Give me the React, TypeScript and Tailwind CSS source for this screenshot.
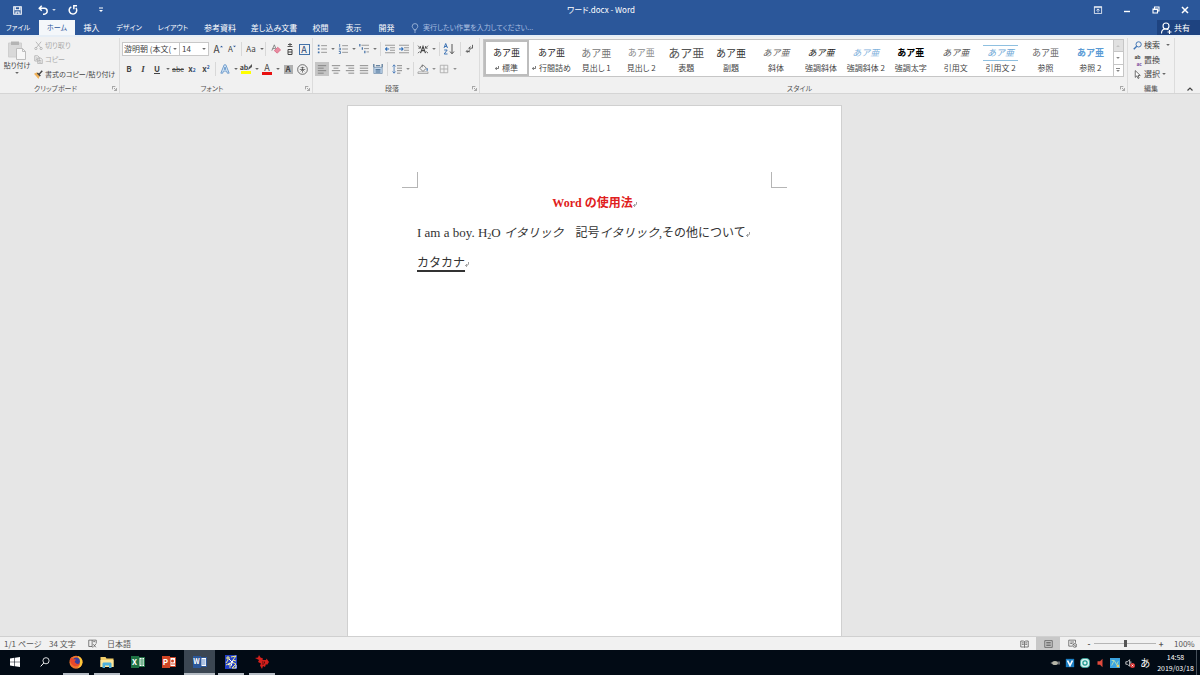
import type { ReactNode } from "react";
import { clsx } from "clsx";

interface ToolProps {
  label: string;
  className?: string;
  children: ReactNode;
}

function Tool({ label, className, children }: ToolProps) {
  return (
    <button
      aria-label={label}
      title={label}
      className={clsx(
        "flex h-3.5 shrink-0 items-center justify-center leading-none",
        className
      )}
    >
      {children}
    </button>
  );
}

function Caret({ className }: { className?: string }) {
  return (
    <svg viewBox="0 0 4 2" className={clsx("h-0.5 w-1 shrink-0 opacity-80", className)} fill="currentColor">
      <path d="M.2 0h3.600L2 2z" />
    </svg>
  );
}

function More({ label }: { label: string }) {
  return (
    <Tool label={label} className="w-[7px]">
      <Caret />
    </Tool>
  );
}

function Sep({ className }: { className?: string }) {
  return <span className={clsx("h-3.5 w-px shrink-0 bg-[#d8d8d8]", className)} />;
}

function Svg({
  className,
  box = "0 0 12 12",
  children,
}: {
  className?: string;
  box?: string;
  children: ReactNode;
}) {
  return (
    <svg
      viewBox={box}
      fill="none"
      stroke="currentColor"
      className={clsx("shrink-0", className ?? "h-3 w-3")}
    >
      {children}
    </svg>
  );
}

function Launcher({ label }: { label: string }) {
  return (
    <button aria-label={label} className="text-[#777]">
      <Svg className="h-[5px] w-[5px]" box="0 0 6 6">
        <path d="M.5 4V.5H4M2.5 2.5l2 2M5.5 2.5v3h-3" strokeWidth=".8" />
      </Svg>
    </button>
  );
}

function Group({
  label,
  launcher = true,
  className,
  children,
}: {
  label: string;
  launcher?: boolean;
  className?: string;
  children: ReactNode;
}) {
  return (
    <section
      aria-label={label}
      className={clsx("flex shrink-0 flex-col border-r border-[#dcdcdc]", className)}
    >
      <div className="flex-1">{children}</div>
      <div className="flex h-2.5 items-center px-0.5 text-[7px] whitespace-nowrap text-[#555]">
        {launcher && <span className="w-2" />}
        <span className="flex-1 text-center">{label}</span>
        {launcher && (
          <span className="flex w-4 items-center justify-end">
            <Launcher label={label} />
          </span>
        )}
      </div>
    </section>
  );
}

const tabs = [
  { name: "ファイル", width: "w-9 text-[7px]" },
  { name: "ホーム", width: "ml-[3px] w-9 text-[7px]", active: true },
  { name: "挿入", width: "w-[33px]" },
  { name: "デザイン", width: "w-[42px] text-[7px]" },
  { name: "レイアウト", width: "w-[46px] text-[7px]" },
  { name: "参考資料", width: "w-12" },
  { name: "差し込み文書", width: "w-[60px]" },
  { name: "校閲", width: "w-[33px]" },
  { name: "表示", width: "w-[33px]" },
  { name: "開発", width: "w-[33px]" },
];

const styles = [
  { name: "標準", mark: true, look: "text-[9px] text-[#222]", selected: true },
  { name: "行間詰め", mark: true, look: "text-[9px] text-[#222]" },
  { name: "見出し 1", look: "text-[10px] text-[#777]" },
  { name: "見出し 2", look: "text-[9px] text-[#888]" },
  { name: "表題", look: "text-[12px] text-[#555]" },
  { name: "副題", look: "text-[10px] text-[#333]" },
  { name: "斜体", look: "text-[9px] italic text-[#666]" },
  { name: "強調斜体", look: "text-[9px] italic text-[#222]" },
  { name: "強調斜体 2", look: "text-[9px] italic text-[#7fb2dc]" },
  { name: "強調太字", look: "text-[9px] font-bold text-black" },
  { name: "引用文", look: "text-[9px] italic text-[#555]" },
  { name: "引用文 2", look: "text-[9px] italic text-[#6fa8d6] border-y border-[#8fc0e0] px-1" },
  { name: "参照", look: "text-[9px] text-[#666]" },
  { name: "参照 2", look: "text-[9px] font-bold text-[#5b9bd5]" },
];

function TitleBar() {
  return (
    <header className="flex h-5 shrink-0 items-center text-white">
      <div className="flex flex-1 items-center pl-2.5">
        <Tool label="上書き保存" className="w-3.5">
          <Svg className="h-[9px] w-[9px]">
            <path d="M1 1h10v10H1zM3 1v4h6V1M4 11V8h4v3" strokeWidth="1.500" />
          </Svg>
        </Tool>
        <Tool label="元に戻す" className="ml-3 w-3.5">
          <Svg className="h-2.5 w-2.5">
            <path d="M4.500 1L1.500 4l3 3M2 4h5.500a3 3 0 0 1 0 7H6" strokeWidth="1.800" />
          </Svg>
        </Tool>
        <More label="元に戻す一覧" />
        <Tool label="やり直し" className="ml-2 w-4">
          <Svg className="h-2.5 w-2.5">
            <path d="M4 2.200A4.500 4.500 0 1 0 9.500 3.500M10.800 1H7v4" strokeWidth="1.800" />
          </Svg>
        </Tool>
        <Tool label="クイック アクセス ツール バーのカスタマイズ" className="ml-3 w-4">
          <Svg className="h-1.5 w-1.5" box="0 0 6 6">
            <path d="M1 1h4" />
            <path d="M1 3h4L3 5z" fill="currentColor" stroke="none" />
          </Svg>
        </Tool>
      </div>
      <h1>ワード.docx - Word</h1>
      <div className="flex flex-1 items-center justify-end gap-[15px] pr-2">
        <Tool label="リボンの表示オプション" className="w-3.5">
          <Svg className="h-2 w-2.5" box="0 0 12 10">
            <path d="M1.500.5h9v9h-9zM1.500 2h9M6 8V4M4 5.500L6 3.700l2 1.800" />
          </Svg>
        </Tool>
        <Tool label="最小化" className="w-3.5">
          <Svg className="h-2 w-2" box="0 0 8 8">
            <path d="M1 5.500h6" strokeWidth="1.400" />
          </Svg>
        </Tool>
        <Tool label="元に戻す (縮小)" className="w-3.5">
          <Svg className="h-2 w-2" box="0 0 8 8">
            <path d="M1 3h4.500v4H1zM2.500 3V1H7v4H5.500M1 3.500h4.500" strokeWidth="1.100" />
          </Svg>
        </Tool>
        <Tool label="閉じる" className="w-3.5">
          <Svg className="h-2 w-2" box="0 0 8 8">
            <path d="M1 1l6 6M7 1L1 7" strokeWidth="1.500" />
          </Svg>
        </Tool>
      </div>
    </header>
  );
}

function TabBar() {
  return (
    <nav className="flex h-[15px] shrink-0 items-stretch text-white">
      {tabs.map((tab) => (
        <button
          key={tab.name}
          className={clsx(
            "shrink-0 text-center whitespace-nowrap",
            tab.width,
            tab.active && "bg-[#f4f7fa] text-[#2b579a]"
          )}
        >
          {tab.name}
        </button>
      ))}
      <button className="ml-2 flex items-center gap-1 text-[7px] whitespace-nowrap text-[#a9bfe0]">
        <Svg className="h-2.5 w-2" box="0 0 10 12">
          <path d="M3.500 8C3.500 6.500 1.500 6 1.500 3.800a3.500 3.300 0 0 1 7 0C8.500 6 6.500 6.500 6.500 8zM3.700 9.500h2.600M4 11.200h2" />
        </Svg>
        実行したい作業を入力してください...
      </button>
      <button className="ml-auto flex w-[43px] items-center gap-0.5 bg-[#1e4380] pl-[3px]">
        <Svg>
          <circle cx="6" cy="4" r="3" strokeWidth="1.100" />
          <path d="M1.500 11.500C1.500 8.500 3 7 5.500 7c1.500 0 2.300.3 3 .9M9.500 8v4M7.500 10h4" strokeWidth="1.100" />
        </Svg>
        共有
      </button>
    </nav>
  );
}

function Clipboard() {
  return (
    <Group label="クリップボード" className="w-[120px]">
      <div className="flex text-[7px]">
        <button className="flex w-[34px] shrink-0 flex-col items-center pt-0.5">
          <Svg className="h-5 w-5" box="0 0 20 20">
            <path d="M1.500 3h13v14h-13z" fill="#d9d9d9" stroke="#cfcfcf" />
            <path d="M4 1.500h8V5H4z" fill="#b4b4b4" stroke="none" />
            <path d="M9.500 8.500h6l3 3v8h-9z" fill="#f7f7f7" stroke="#bdbdbd" />
            <path d="M15.500 8.500v3h3" stroke="#bdbdbd" />
          </Svg>
          <span className="leading-[10px] whitespace-nowrap">貼り付け</span>
          <Caret className="mt-0.5" />
        </button>
        <div className="flex shrink-0 flex-col">
          <button className="flex h-3.5 items-center gap-0.5 text-[#aaa]">
            <Svg className="h-[9px] w-[9px]">
              <path d="M2.500 1L9 9M9.500 1L3 9" />
              <circle cx="2.500" cy="10" r="1.500" />
              <circle cx="9.500" cy="10" r="1.500" />
            </Svg>
            切り取り
          </button>
          <button className="flex h-[15px] items-center gap-0.5 text-[#aaa]">
            <Svg className="h-[9px] w-[9px]">
              <path d="M1 1h4l2 2v5H1zM5 4h4l2 2v5.500H5z" fill="#eee" />
              <path d="M2.500 4h2M2.500 6h2M6.500 7.500h3M6.500 9.500h3" />
            </Svg>
            コピー
          </button>
          <button className="flex h-3.5 items-center gap-0.5 whitespace-nowrap">
            <Svg className="h-[9px] w-[9px]">
              <path d="M0 5l4-2 4 4-2 5z" fill="#f0b25a" stroke="none" />
              <path d="M4.500 4l4 4M7 5.500L11 1" stroke="#444" strokeWidth="2" />
            </Svg>
            書式のコピー/貼り付け
          </button>
        </div>
      </div>
    </Group>
  );
}

function FontGroup() {
  return (
    <Group label="フォント" className="w-[193px]">
      <div className="flex flex-col gap-1.5 pt-1 pl-0.5">
        <div className="flex items-center">
          <div className="flex h-3.5 w-[58px] items-center border border-[#c8c8c8] bg-white pr-0.5">
            <select
              aria-label="フォント名"
              className="w-0 flex-1 appearance-none overflow-hidden pl-px leading-3 whitespace-nowrap"
            >
              <option>游明朝 (本文(</option>
            </select>
            <Caret />
          </div>
          <div className="-ml-px flex h-3.5 w-[30px] items-center border border-[#c8c8c8] bg-white pr-0.5">
            <select
              aria-label="フォント サイズ"
              className="w-0 flex-1 appearance-none pl-0.5 leading-3"
            >
              <option>14</option>
            </select>
            <Caret />
          </div>
          <Tool label="フォント サイズの拡大" className="ml-0.5 w-3.5 text-[10px]">
            A
            <Svg className="mb-1.5 h-[3px] w-[3px]" box="0 0 4 4">
              <path d="M0 3l2-2 2 2z" fill="#2b579a" stroke="none" />
            </Svg>
          </Tool>
          <Tool label="フォント サイズの縮小" className="w-3.5">
            A
            <Svg className="mb-1.5 h-[3px] w-[3px]" box="0 0 4 4">
              <path d="M0 1h4L2 3z" fill="#2b579a" stroke="none" />
            </Svg>
          </Tool>
          <Sep className="ml-0.5" />
          <Tool label="文字種の変換" className="ml-0.5 w-3.5">
            Aa
          </Tool>
          <More label="文字種の一覧" />
          <Sep />
          <Tool label="書式のクリア" className="ml-[3px] w-3.5">
            <Svg className="h-2.5 w-2.5">
              <path d="M1 8l3-7 2 5M2 5.500h3" stroke="#777" />
              <path d="M4 8l4-4 3.500 3L7.500 11z" fill="#e88ba0" stroke="#d86b84" />
            </Svg>
          </Tool>
          <Tool label="ルビ" className="w-3.5">
            <Svg className="h-3 w-2" box="0 0 8 12">
              <path d="M2 1.500h4M4 0v4M1.500 3.500h5" stroke="#555" />
              <path d="M2 6.500h4v5H2zM2 9h4" stroke="#444" />
            </Svg>
          </Tool>
          <Tool label="囲み線" className="w-3.5">
            <span className="flex h-[11px] w-[11px] items-center justify-center border border-[#4472a8] text-[9px] leading-none text-[#1f3f70]">
              A
            </span>
          </Tool>
        </div>
        <div className="flex items-center">
          <Tool label="太字" className="w-3.5 font-bold">
            B
          </Tool>
          <Tool label="斜体" className="w-3.5 font-['Liberation_Serif',serif] text-[9px] font-bold italic">
            I
          </Tool>
          <Tool label="下線" className="w-3.5 font-bold underline">
            U
          </Tool>
          <More label="下線の一覧" />
          <Tool label="取り消し線" className="w-3.5 text-[7px] line-through">
            abc
          </Tool>
          <Tool label="下付き" className="w-3.5 font-bold">
            x<sub className="text-[5px] text-[#2b579a]">2</sub>
          </Tool>
          <Tool label="上付き" className="w-3.5 font-bold">
            x<sup className="text-[5px] text-[#2b579a]">2</sup>
          </Tool>
          <Sep className="ml-0.5" />
          <Tool label="文字の効果と体裁" className="ml-0.5 w-3.5">
            <Svg className="h-2.5 w-2.5">
              <path d="M1 11L5 1h2l4 10H8.700L8 8.500H4L3.300 11zM5 6.500h2L6 3.500z" fill="#dcebf8" stroke="#5b8fc7" />
            </Svg>
          </Tool>
          <More label="文字の効果の一覧" />
          <Tool label="蛍光ペンの色" className="w-3.5">
            <span className="flex flex-col items-center text-[7px] leading-[7px] font-bold">
              <span className="flex">
                ab
                <Svg className="h-1.5 w-1" box="0 0 4 6">
                  <path d="M0 6l1-3 3-3v3z" fill="#555" stroke="none" />
                </Svg>
              </span>
              <span className="h-[3px] w-2.5 bg-[#ffff00]" />
            </span>
          </Tool>
          <More label="蛍光ペンの一覧" />
          <Tool label="フォントの色" className="w-3.5">
            <span className="flex flex-col items-center text-[9px] leading-[8px]">
              A
              <span className="h-[3px] w-2.5 bg-[#e81010]" />
            </span>
          </Tool>
          <More label="フォントの色の一覧" />
          <Tool label="文字の網かけ" className="w-3.5">
            <span className="flex h-[9px] w-[9px] items-center justify-center bg-[#b0b0b0] text-[8px] leading-none font-bold">
              A
            </span>
          </Tool>
          <Tool label="囲い文字" className="w-3.5">
            <Svg className="h-[11px] w-[11px]">
              <circle cx="6" cy="6" r="5.300" strokeWidth=".8" />
              <path d="M4 4h4M3 6h6M6 3v6.500M6 6l2 2M6 6L4 8" strokeWidth=".7" />
            </Svg>
          </Tool>
        </div>
      </div>
    </Group>
  );
}

function ParagraphGroup() {
  return (
    <Group label="段落" className="w-[167px] text-[#555]">
      <div className="flex flex-col gap-1.5 pt-1 pl-0.5">
        <div className="flex items-center">
          <Tool label="箇条書き" className="w-3.5">
            <Svg className="h-2.5 w-2.5">
              <path d="M5 2h7M5 6h7M5 10h7" stroke="#888" />
              <path d="M1 2h2M1 6h2M1 10h2" stroke="#4472a8" strokeWidth="2" />
            </Svg>
          </Tool>
          <More label="箇条書きの一覧" />
          <Tool label="段落番号" className="w-3.5">
            <Svg className="h-2.5 w-2.5">
              <path d="M5 2h7M5 6h7M5 10h7" stroke="#888" />
              <path d="M2 0v3.500M1 5h2v2H1M1 9h2v2.500H1" stroke="#4472a8" />
            </Svg>
          </Tool>
          <More label="段落番号の一覧" />
          <Tool label="アウトライン" className="w-3.5">
            <Svg className="h-2.5 w-2.5">
              <path d="M3 1.500h9M6 5.500h6M9 9.500h3" stroke="#888" />
              <path d="M1 0v3M4 4v3M7 8v3" stroke="#4472a8" strokeWidth="1.500" />
            </Svg>
          </Tool>
          <More label="アウトラインの一覧" />
          <Sep className="ml-0.5" />
          <Tool label="インデントを減らす" className="ml-0.5 w-3.5">
            <Svg className="h-2.5 w-2.5">
              <path d="M0 1.500h12M6 4.500h6M6 7.500h6M0 10.500h12" stroke="#888" />
              <path d="M5 6H.8M2.500 4L.7 6l1.800 2" stroke="#2b6cb8" strokeWidth="1.300" />
            </Svg>
          </Tool>
          <Tool label="インデントを増やす" className="w-3.5">
            <Svg className="h-2.5 w-2.5">
              <path d="M0 1.500h12M6 4.500h6M6 7.500h6M0 10.500h12" stroke="#888" />
              <path d="M0 6h4.500M3 4l1.800 2L3 8" stroke="#2b6cb8" strokeWidth="1.300" />
            </Svg>
          </Tool>
          <Sep className="ml-0.5" />
          <Tool label="拡張書式" className="ml-0.5 w-3.5">
            <Svg className="h-2.5 w-3" box="0 0 14 12">
              <path d="M4 11l3-8 3 8M5 8h4" stroke="#444" strokeWidth="1.400" />
              <path d="M1 2l3 3M4 2.500V5H1.500M13 2l-3 3M10 2.500V5h2.500" stroke="#444" />
              <path d="M1 11l2-2M13 11l-2-2" stroke="#444" />
            </Svg>
          </Tool>
          <More label="拡張書式の一覧" />
          <Sep className="ml-0.5" />
          <Tool label="並べ替え" className="ml-0.5 w-3.5">
            <Svg>
              <path d="M1 5l1.700-4.500L4.500 5M1.500 3.500h2.400M1.200 7h3L1.200 11h3.300" stroke="#3f74b5" />
              <path d="M9 1v9.500M7 8.500l2 2.300 2-2.300" stroke="#555" />
            </Svg>
          </Tool>
          <Sep className="ml-1" />
          <Tool label="編集記号の表示/非表示" className="ml-0.5 w-3.5">
            <Svg className="h-2.5 w-2.5">
              <path d="M9 1v4H5M6.500 3L4.500 5l2 2M5 7v3M3 7L1.500 9 3 10.500M2 9h3" stroke="#444" />
            </Svg>
          </Tool>
        </div>
        <div className="flex items-center text-[#777]">
          <Tool label="左揃え" className="w-3.5 bg-[#c5c5c5]">
            <Svg className="h-2.5 w-2.5">
              <path d="M1 2h10M1 5h7M1 8h10M1 11h7" />
            </Svg>
          </Tool>
          <Tool label="中央揃え" className="w-3.5">
            <Svg className="h-2.5 w-2.5">
              <path d="M1 2h10M3 5h6M1 8h10M3 11h6" />
            </Svg>
          </Tool>
          <Tool label="右揃え" className="w-3.5">
            <Svg className="h-2.5 w-2.5">
              <path d="M1 2h10M4 5h7M1 8h10M4 11h7" />
            </Svg>
          </Tool>
          <Tool label="両端揃え" className="w-3.5">
            <Svg className="h-2.5 w-2.5">
              <path d="M1 2h10M1 5h10M1 8h10M1 11h10" />
            </Svg>
          </Tool>
          <Tool label="均等割り付け" className="w-3.5">
            <Svg className="h-2.5 w-2.5">
              <path d="M1 4h10v7.500H1z" fill="#c3d8ee" stroke="#7a94b0" />
              <path d="M1 0v4M11 0v4M3.500 2h5M3 7h6M3 9.500h6" stroke="#3c6288" strokeWidth="1.300" />
            </Svg>
          </Tool>
          <Sep className="ml-0.5" />
          <Tool label="行と段落の間隔" className="ml-0.5 w-3.5">
            <Svg className="h-2.5 w-2.5">
              <path d="M6 2h6M6 5h6M6 8h6M6 11h4" />
              <path d="M2.500 1v10M.7 3l1.800-2 1.800 2M.7 9l1.800 2 1.800-2" stroke="#3f74b5" />
            </Svg>
          </Tool>
          <More label="間隔の一覧" />
          <Sep className="ml-0.5" />
          <Tool label="塗りつぶし" className="ml-0.5 w-3.5">
            <Svg className="h-2.5 w-3" box="0 0 14 12">
              <path d="M3 5l4-4 4 4-4 4zM6 1v3" stroke="#666" />
              <path d="M12 5v3" stroke="#3f74b5" strokeWidth="1.500" />
              <path d="M1 9.500h12v2H1z" stroke="#999" fill="#fff" />
            </Svg>
          </Tool>
          <More label="塗りつぶしの一覧" />
          <Tool label="罫線" className="w-3.5">
            <Svg className="h-2.5 w-2.5">
              <path d="M1.500 1.500h9v9h-9zM6 1.500v9M1.500 6h9" stroke="#aaa" />
            </Svg>
          </Tool>
          <More label="罫線の一覧" />
        </div>
      </div>
    </Group>
  );
}

function StylesGroup() {
  return (
    <Group label="スタイル" className="min-w-0 flex-1">
      <div className="mt-px mr-[3px] ml-[3px] flex h-[38px] border border-[#c6c6c6] bg-white">
        {styles.map((style) => (
          <button
            key={style.name}
            className={clsx(
              "flex w-0 flex-1 flex-col items-center justify-between py-1 whitespace-nowrap",
              style.selected && "ring-2 ring-[#bdbdbd] ring-inset"
            )}
          >
            <span className="flex h-[18px] items-center [font-feature-settings:normal]">
              <span className={clsx("leading-[14px]", style.look)}>あア亜</span>
            </span>
            <span className="flex items-center gap-[3px] leading-[8px] text-[#444]">
              {style.mark && (
                <Svg className="h-1 w-1" box="0 0 4 4">
                  <path d="M3.500 0v2.500H.5M1.800 1L.4 2.500 1.800 4" strokeWidth=".7" />
                </Svg>
              )}
              {style.name}
            </span>
          </button>
        ))}
        <div className="flex w-2.5 shrink-0 flex-col border-l border-[#c6c6c6] text-[#666]">
          <button aria-label="前の行" className="flex flex-1 items-center justify-center bg-[#e1e1e1] text-[#bbb]">
            <Caret className="rotate-180" />
          </button>
          <button aria-label="次の行" className="flex flex-1 items-center justify-center border-y border-[#c6c6c6]">
            <Caret />
          </button>
          <button aria-label="その他" className="flex flex-1 flex-col items-center justify-center gap-px">
            <span className="h-px w-1 bg-[#888]" />
            <Caret />
          </button>
        </div>
      </div>
    </Group>
  );
}

function EditingGroup() {
  return (
    <Group label="編集" launcher={false} className="w-[47px]">
      <div className="flex flex-col pl-[5px]">
        <button className="flex h-3.5 items-center gap-0.5">
          <Svg className="h-[9px] w-[9px]">
            <circle cx="7.500" cy="4.500" r="3.500" stroke="#3f74b5" strokeWidth="1.300" />
            <path d="M5 7l-4 4" stroke="#3f74b5" strokeWidth="1.800" />
          </Svg>
          検索
          <Caret className="ml-1" />
        </button>
        <button className="flex h-[15px] items-center gap-0.5">
          <span className="flex w-[9px] flex-col text-[5px] leading-[7px] font-bold">
            <span>ab</span>
            <span className="text-right text-[#7d4fa0]">ac</span>
          </span>
          置換
        </button>
        <button className="flex h-3.5 items-center gap-0.5">
          <Svg className="h-[9px] w-[9px]">
            <path d="M3 .8v9l2.200-2 1.500 3.500 1.500-.7-1.500-3.300h3z" fill="#fff" />
          </Svg>
          選択
          <Caret />
        </button>
      </div>
    </Group>
  );
}

function Ribbon() {
  return (
    <div className="flex h-[59px] shrink-0 border-t-2 border-b border-t-[#e6eef6] border-b-[#d5d5d5] bg-[#f1f1f1] pt-px text-[#444]">
      <Clipboard />
      <FontGroup />
      <ParagraphGroup />
      <StylesGroup />
      <EditingGroup />
      <div className="flex w-[25px] items-end justify-center pl-1 pb-0.5">
        <button aria-label="リボンを折りたたむ">
          <Svg className="h-1 w-1.5" box="0 0 6 4">
            <path d="M.5 3.500L3 1l2.500 2.500" strokeWidth="1.200" />
          </Svg>
        </button>
      </div>
    </div>
  );
}

function Return({ className }: { className?: string }) {
  return (
    <Svg className={clsx("inline-block h-[5px] w-1", className)} box="0 0 4 5">
      <path d="M3.500 0v2Q3.500 3.500.6 3.500M2 2L.6 3.500 2 5" stroke="#777" strokeWidth=".7" />
    </Svg>
  );
}

function Document() {
  return (
    <main className="flex min-h-0 flex-1 flex-col items-center overflow-hidden bg-[#e6e6e6] pt-[11px] pr-[11px]">
      <article className="w-[495px] flex-1 border border-b-0 border-[#d0d0d0] bg-white px-[54px] pt-[66px] font-['Liberation_Serif','Noto_Sans_CJK_JP',serif] text-[12px] leading-[30px] text-[#333] [font-feature-settings:normal]">
        <div className="flex justify-between">
          <span className="h-4 w-4 border-r border-b border-[#b5b5b5]" />
          <span className="h-4 w-4 border-b border-l border-[#b5b5b5]" />
        </div>
        <div className="px-[15px] whitespace-nowrap">
          <h2 className="text-center font-bold text-[#e02020]">
            Word の使用法
            <Return />
          </h2>
          <p>
            <span className="text-[13px]">
              I am a boy. H<sub className="text-[8px]">2</sub>O{" "}
            </span>
            <i>イタリック</i>　記号<i>イタリック</i>,その他について
            <Return />
          </p>
          <p>
            <span className="underline decoration-2 underline-offset-3">カタカナ</span>
            <Return />
          </p>
        </div>
      </article>
    </main>
  );
}

function StatusBar() {
  return (
    <footer className="flex h-3.5 shrink-0 items-center border-t border-[#d0d0d0] bg-[#f1f1f1] pl-1 text-[#555]">
      <span className="w-[45px]">1/1 ページ</span>
      <span className="w-[35px]">34 文字</span>
      <Tool label="文章校正" className="w-[23px] pr-1.5">
        <Svg className="h-[9px] w-[9px]">
          <path d="M1 1.500h4.500V10H1zM5.500 1.500H11V6M7 3.500h2.500M5.500 10l1 1.500M7.500 10.500l3-4M7 7l3.500 4" />
        </Svg>
      </Tool>
      <span>日本語</span>
      <div className="ml-auto flex items-center">
        <Tool label="閲覧モード" className="w-6">
          <Svg className="h-2 w-[9px]" box="0 0 12 10">
            <path d="M6 2v7.500M1 1h4l1 1 1-1h4v8H7L6 9.500 5 9H1zM2.500 3.500H5M2.500 5.500H5M7 3.500h2.500M7 5.500h2.500" />
          </Svg>
        </Tool>
        <Tool label="印刷レイアウト" className="w-6 bg-[#c8c8c8]">
          <Svg className="h-2 w-[9px]" box="0 0 12 10">
            <path d="M1 .5h10v9H1zM3 3h6M3 5h6M3 7h6" />
          </Svg>
        </Tool>
        <Tool label="Web レイアウト" className="w-6">
          <Svg className="h-[9px] w-[9px]">
            <path d="M6 9.500H1v-8h9V5M3 4h5M3 6h3" />
            <circle cx="9" cy="8.500" r="2.500" />
            <path d="M7 7l4 3" />
          </Svg>
        </Tool>
        <Tool label="縮小" className="w-2.5 font-bold">
          -
        </Tool>
        <input
          type="range"
          aria-label="ズーム"
          defaultValue={50}
          className="h-2 w-[62px] appearance-none bg-[linear-gradient(#b5b5b5,#b5b5b5)] bg-[length:100%_1px] bg-center bg-no-repeat [&::-webkit-slider-thumb]:h-[7px] [&::-webkit-slider-thumb]:w-[3px] [&::-webkit-slider-thumb]:appearance-none [&::-webkit-slider-thumb]:bg-[#555]"
        />
        <Tool label="拡大" className="w-2.5 font-bold">
          +
        </Tool>
        <span className="w-[34px] pl-2">100%</span>
      </div>
    </footer>
  );
}

interface TaskProps {
  label: string;
  open?: boolean;
  active?: boolean;
  className?: string;
  children: ReactNode;
}

function Task({ label, open, active, className, children }: TaskProps) {
  return (
    <button
      aria-label={label}
      className={clsx(
        "flex flex-col items-center",
        className ?? "w-[31px]",
        active && "bg-[#3b4652]"
      )}
    >
      <span className="flex flex-1 items-center">{children}</span>
      <span
        className={clsx("h-0.5", active ? "w-full" : "w-[26px]", (open || active) && "bg-[#b5bcc4]")}
      />
    </button>
  );
}

function Taskbar() {
  return (
    <div className="flex h-[25px] shrink-0 bg-[#020b15] text-white">
      <Task label="スタート" className="w-[29px]">
        <Svg className="h-2.5 w-2.5">
          <path d="M0 1.700l5.300-.8v4.700H0zM6 .8L12 0v5.600H6zM0 6.300h5.300V11L0 10.300zM6 6.300h6V12l-6-.8z" fill="#fff" stroke="none" />
        </Svg>
      </Task>
      <Task label="検索">
        <Svg className="h-2.5 w-2.5">
          <circle cx="7.200" cy="4.500" r="3.700" />
          <path d="M4.500 7.200L.8 11.300" strokeWidth="1.200" />
        </Svg>
      </Task>
      <Task label="Firefox" open>
        <Svg className="h-3.5 w-3.5" box="0 0 14 14">
          <circle cx="7" cy="7.200" r="6.500" fill="#f0742c" stroke="none" />
          <path d="M9 1c3 1 4.600 3.500 4.500 6.500C13 11 10.500 13 8 13.500c3-2 3.500-5 2-8z" fill="#fcc93a" stroke="none" />
          <circle cx="7.300" cy="6.200" r="3.600" fill="#3b3f9c" stroke="none" />
          <path d="M1 4l1.500-2L4 4l3 .5L5.500 7 8 9l3-.5C10 11 7 12 4.500 10.800 2 9.500 1 7 1 4z" fill="#e8482c" stroke="none" />
        </Svg>
      </Task>
      <Task label="エクスプローラー" open>
        <Svg className="h-3 w-3.5" box="0 0 14 12">
          <path d="M.5 1h5l1 1.500h7V11H.5z" fill="#f3cf6b" stroke="none" />
          <path d="M.5 4h13v7H.5z" fill="#fbe59b" stroke="none" />
          <path d="M2.500 12V8c0-1 .5-1.500 1.500-1.500h6c1 0 1.500.5 1.500 1.500v4H9V9.500H5V12z" fill="#4db0dc" stroke="none" />
        </Svg>
      </Task>
      <Task label="Excel">
        <span className="flex items-center">
          <span className="flex h-3 w-2 items-center justify-center bg-[#1f7244] text-[8px] font-bold">X</span>
          <Svg className="h-2.5 w-1.5" box="0 0 6 10">
            <path d="M0 .5h5.500v9H0z" fill="#fff" stroke="#1f7244" />
            <path d="M1 3h4M1 5h4M1 7h4M3 1v8" stroke="#4b9a6d" />
          </Svg>
        </span>
      </Task>
      <Task label="PowerPoint">
        <span className="flex items-center">
          <span className="flex h-3 w-2 items-center justify-center bg-[#d04525] text-[8px] font-bold">P</span>
          <Svg className="h-2.5 w-1.5" box="0 0 6 10">
            <path d="M0 .5h5.500v9H0z" fill="#fff" stroke="#d04525" />
            <circle cx="2.500" cy="4" r="1.500" fill="#d04525" stroke="none" />
            <path d="M1 7h4" stroke="#d04525" />
          </Svg>
        </span>
      </Task>
      <Task label="Word" active>
        <span className="flex items-center">
          <span className="flex h-3 w-2 items-center justify-center bg-[#2b579a] text-[7px] font-bold">W</span>
          <Svg className="h-2.5 w-1.5" box="0 0 6 10">
            <path d="M0 .5h5.500v9H0z" fill="#fff" stroke="#2b579a" />
            <path d="M1 3h3.500M1 5h3.500M1 7h3.500" stroke="#5b84c0" />
          </Svg>
        </span>
      </Task>
      <Task label="アプリ" open>
        <Svg className="h-3.5 w-3.5" box="0 0 14 14">
          <path d="M1 0h12v14H1z" fill="#2340c8" stroke="none" />
          <path d="M2 3h4M4 1v4L2 8M7 2l5-1-3 4 3 1M2 10l4-2v5M8 7l4 2-4 4h4" stroke="#f4ec7c" />
          <path d="M5 4l3 3-4 3M9 5l-2 6M12 10v3" stroke="#fff" />
        </Svg>
      </Task>
      <Task label="ツール" open>
        <Svg className="h-3.5 w-3.5" box="0 0 14 14">
          <path d="M0 3l3-.5L4 0l1.500 2.500L8 3.500 7.500 5H11l.5-1.500L14 7l-2 3-1-1-1 3-2-1-1 3-2-3.500 1-2L3 7l1-2z" fill="#d3201c" stroke="none" />
          <path d="M7 7h1.500M9.500 6.500v2M7 9h2" stroke="#5e0a0a" />
        </Svg>
      </Task>
      <div className="ml-auto flex items-center gap-[5px]">
        <Svg className="h-2.5 w-2.5">
          <path d="M1 6h2M9 5h3M9 7h3" stroke="#bbb" />
          <ellipse cx="6" cy="6" rx="3.500" ry="2.500" fill="#b5b5a8" stroke="none" />
        </Svg>
        <Svg className="h-2.5 w-2.5">
          <path d="M1 1h10v10H1z" fill="#1c7fc4" stroke="none" />
          <path d="M3 3l3 6 3-6" stroke="#fff" strokeWidth="2" />
        </Svg>
        <Svg className="h-2.5 w-2.5">
          <rect x=".5" y=".5" width="11" height="11" rx="4" fill="#d8f4f0" stroke="#31b0a5" />
          <circle cx="6" cy="6" r="2.500" stroke="#1e9a90" strokeWidth="1.500" />
        </Svg>
        <Svg className="h-2.5 w-2.5">
          <path d="M9 1v10L6 8H3V4h3z" fill="#e04a3c" stroke="none" />
        </Svg>
        <Svg className="h-2.5 w-2.5">
          <path d="M0 0h12v12H0z" fill="#3ba3e0" stroke="none" />
          <path d="M2 9l3-6 3 5 2-4M2 3h3" stroke="#bfe6b0" />
          <path d="M8 8h3v3H8z" fill="#f0d060" stroke="none" />
        </Svg>
        <Svg className="h-2.5 w-2.5">
          <path d="M1 4.500h2L5.500 2v8L3 7.500H1zM7 4v3" stroke="#ddd" />
          <circle cx="9" cy="9" r="3" fill="#d93636" stroke="none" />
          <path d="M8 8l2 2M10 8l-2 2" stroke="#fff" />
        </Svg>
        <span className="text-[10px] leading-none">あ</span>
        <div className="flex h-full items-center">
          <div className="flex w-[41px] flex-col text-center text-[7px] leading-[11px]">
            <time>14:58</time>
            <time>2019/03/18</time>
          </div>
          <span className="h-full w-1 border-l border-[#46505a]" />
        </div>
      </div>
    </div>
  );
}

export default function App() {
  return (
    <div className="flex h-screen flex-col overflow-hidden bg-[#2b579a] font-['Noto_Sans_CJK_JP',sans-serif] text-[8px] [font-feature-settings:'palt']">
      <TitleBar />
      <TabBar />
      <Ribbon />
      <Document />
      <StatusBar />
      <Taskbar />
    </div>
  );
}
